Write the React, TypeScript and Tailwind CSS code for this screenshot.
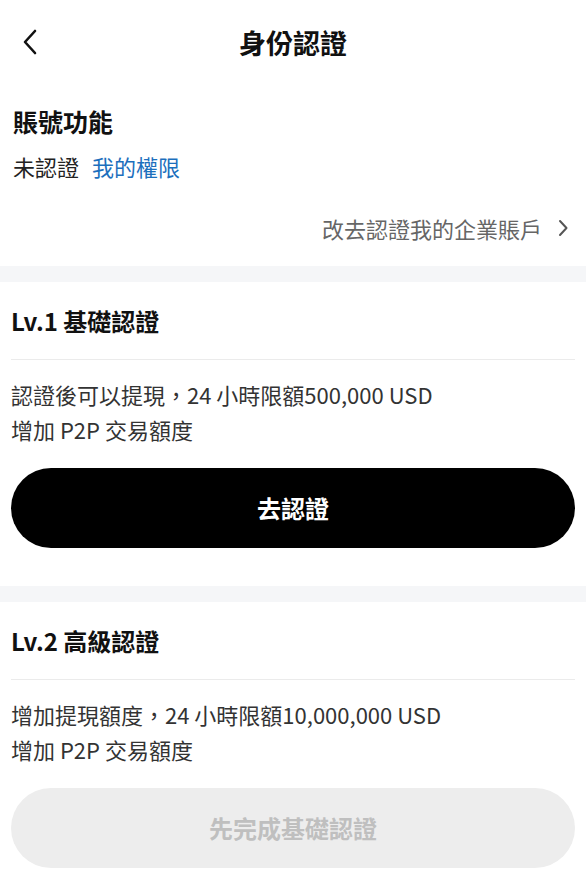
import React from "react";

const font = { fontFamily: '"Noto Sans CJK TC", "Noto Sans", sans-serif' };

function Section({ title, line1, btn, disabled }: { title: string; line1: string; btn: string; disabled?: boolean }) {
  return (
    <div className="px-[11px]">
      <div className="h-[78px] flex items-center text-[24px] font-bold text-[#111] pt-[1px] border-b border-[#ebebeb]">{title}</div>
      <div className="pt-[17px] text-[22px] leading-[35px] text-[#333]">
        <div>{line1}</div>
        <div>增加 P2P 交易額度</div>
      </div>
      <div
        className={`mt-[21px] h-[80px] rounded-full flex items-center justify-center text-[24px] font-bold ${
          disabled ? "bg-[#ededed] text-[#bfbfbf]" : "bg-black text-white"
        }`}
      >
        {btn}
      </div>
    </div>
  );
}

export default function App() {
  return (
    <div className="w-[586px] h-[877px] bg-white overflow-hidden" style={font}>
      <div className="relative h-[86px] flex items-center justify-center">
        <svg className="absolute left-[22px] top-[29px]" width="16" height="26" viewBox="0 0 16 26" fill="none">
          <path d="M13 2L3 13L13 24" stroke="#111" strokeWidth="2.6" strokeLinecap="round" strokeLinejoin="round" />
        </svg>
        <div className="text-[27px] font-bold text-[#111]">身份認證</div>
      </div>
      <div className="px-[13px]">
        <div className="text-[25px] font-bold text-[#111] leading-[32px] pt-[19px]">賬號功能</div>
        <div className="flex items-center gap-[13px] text-[22px] mt-[14px] leading-[30px]">
          <span className="text-[#222]">未認證</span>
          <span className="text-[#1c6fbd]">我的權限</span>
        </div>
        <div className="flex items-center justify-end text-[22px] text-[#666] mt-[32px] leading-[30px] pr-[4px]">
          <span>改去認證我的企業賬戶</span>
          <svg className="ml-[15px]" width="12" height="18" viewBox="0 0 12 18" fill="none">
            <path d="M3 2L9.5 9L3 16" stroke="#555" strokeWidth="2" strokeLinecap="round" strokeLinejoin="round" />
          </svg>
        </div>
      </div>
      <div className="h-[16px] bg-[#f5f6f8] mt-[23px]" />
      <Section title="Lv.1 基礎認證" line1="認證後可以提現，24 小時限額500,000 USD" btn="去認證" />
      <div className="h-[16px] bg-[#f5f6f8] mt-[38px]" />
      <Section title="Lv.2 高級認證" line1="增加提現額度，24 小時限額10,000,000 USD" btn="先完成基礎認證" disabled />
    </div>
  );
}
